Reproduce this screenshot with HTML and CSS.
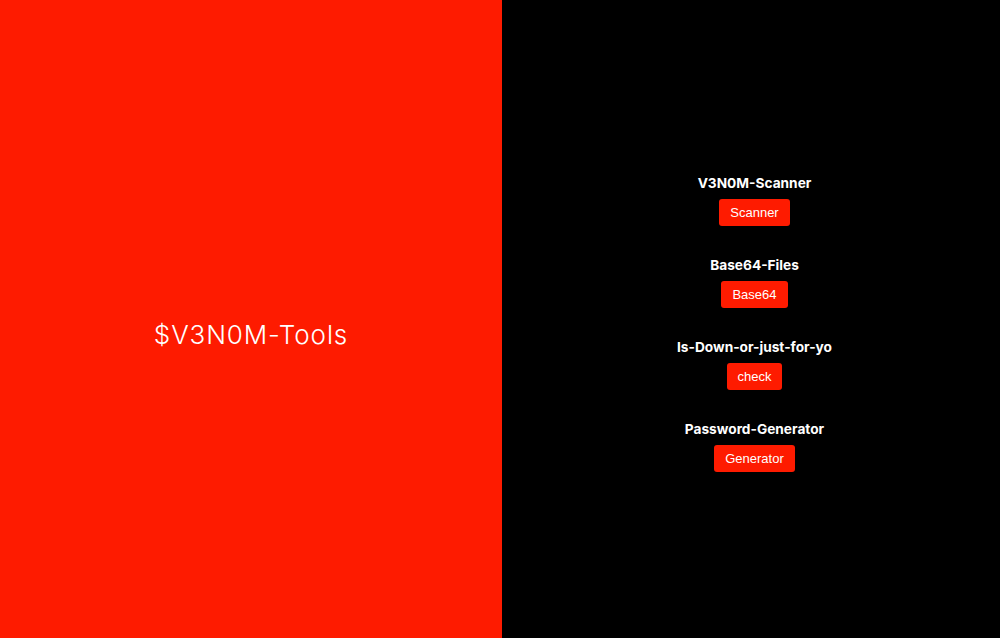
FILE: index.html
```html
<!DOCTYPE html>
<html>
<head>
<meta charset="utf-8">
<link rel="stylesheet" href="styles.css">
</head>
<body>
<div class="page">
  <div class="left">
    <h1 class="title">$V3N0M-Tools</h1>
  </div>
  <div class="right">
    <div class="tools">
      <div class="tool">
        <h2 class="tool-name">V3N0M-Scanner</h2>
        <button class="btn">Scanner</button>
      </div>
      <div class="tool">
        <h2 class="tool-name">Base64-Files</h2>
        <button class="btn">Base64</button>
      </div>
      <div class="tool">
        <h2 class="tool-name">Is-Down-or-just-for-yo</h2>
        <button class="btn">check</button>
      </div>
      <div class="tool">
        <h2 class="tool-name">Password-Generator</h2>
        <button class="btn">Generator</button>
      </div>
    </div>
  </div>
</div>
</body>
</html>
```
FILE: styles.css
```css
html, body {
  margin: 0;
  padding: 0;
  height: 100%;
}
.page {
  display: flex;
  height: 638px;
  width: 1000px;
}
.left {
  width: 502px;
  background: #fe1b00;
  display: flex;
  align-items: center;
  justify-content: center;
  padding-top: 30px;
  box-sizing: border-box;
}
.title {
  margin: 0;
  color: #fff;
  font-family: Inter, "Noto Sans", sans-serif;
  font-weight: 300;
  font-size: 26px;
  letter-spacing: 0.9px;
}
.right {
  flex: 1;
  background: #000;
  display: flex;
  align-items: center;
  justify-content: center;
  padding-top: 9px;
  padding-left: 7px;
  box-sizing: border-box;
}
.tools {
  display: flex;
  flex-direction: column;
  align-items: center;
  gap: 31px;
}
.tool {
  display: flex;
  flex-direction: column;
  align-items: center;
  gap: 7px;
}
.tool-name {
  margin: 0;
  color: #fff;
  font-family: Inter, "Noto Sans", sans-serif;
  font-weight: 700;
  font-size: 13.7px;
  line-height: 17px;
}
.btn {
  background: #fe1b00;
  color: #fff;
  border: none;
  border-radius: 3px;
  font-family: "Liberation Sans", Arial, sans-serif;
  font-size: 13px;
  line-height: 15px;
  padding: 6px 11px;
  height: 27px;
}
```
